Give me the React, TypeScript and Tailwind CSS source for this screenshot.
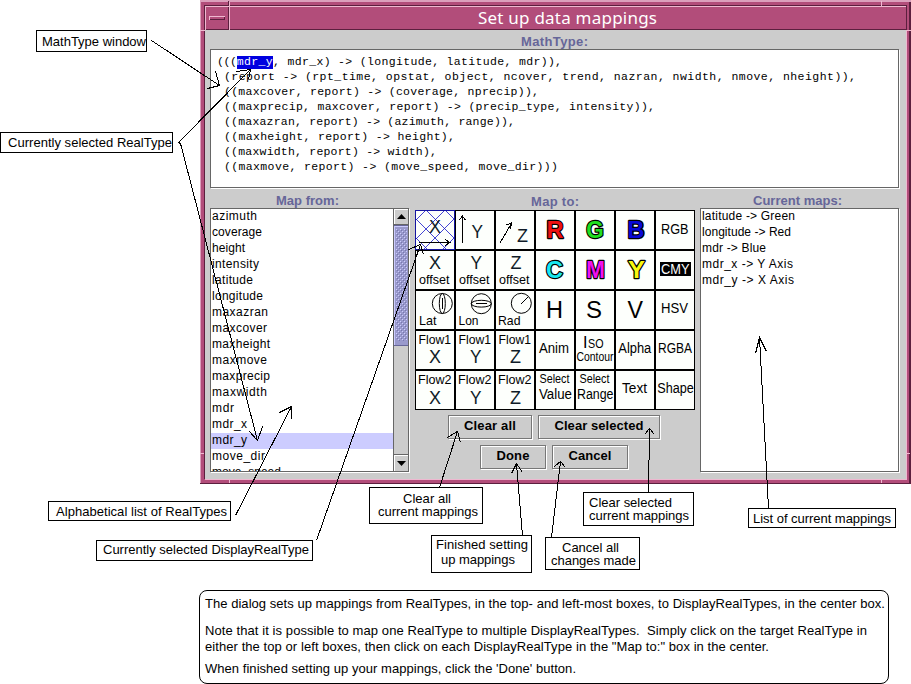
import { useLayoutEffect, useRef, useState } from "react";
import type { ReactNode } from "react";

// Single line of text whose tracking is computed so that it spans `w` pixels.
function Fit({ w, children, className = "" }: { w: number; children: string; className?: string }) {
  const ref = useRef<HTMLSpanElement>(null);
  const [spacing, setSpacing] = useState(0);
  useLayoutEffect(() => {
    const el = ref.current;
    if (!el) return;
    const natural = el.getBoundingClientRect().width;
    setSpacing((w - natural) / Math.max(1, children.length - 1));
  }, [w, children]);
  return (
    <span ref={ref} className={`inline-block shrink-0 whitespace-pre ${className}`} style={{ letterSpacing: `${spacing}px` }}>
      {children}
    </span>
  );
}

const mathLines: [string, number][] = [
  ["(report -> (rpt_time, opstat, object, ncover, trend, nazran, nwidth, nmove, nheight)),", 632],
  ["((maxcover, report) -> (coverage, nprecip)),", 315],
  ["((maxprecip, maxcover, report) -> (precip_type, intensity)),", 431],
  ["((maxazran, report) -> (azimuth, range)),", 291],
  ["((maxheight, report) -> height),", 231],
  ["((maxwidth, report) -> width),", 213],
  ["((maxmove, report) -> (move_speed, move_dir)))", 334],
];

const realTypes: [string, number][] = [
  ["azimuth", 45], ["coverage", 50], ["height", 33], ["intensity", 47], ["latitude", 41],
  ["longitude", 51], ["maxazran", 56], ["maxcover", 55], ["maxheight", 58], ["maxmove", 55],
  ["maxprecip", 58], ["maxwidth", 55], ["mdr", 22], ["mdr_x", 35], ["mdr_y", 35],
  ["move_dir", 53], ["move_speed", 69],
];

const currentMaps: [string, number][] = [
  ["latitude -> Green", 93], ["longitude -> Red", 89], ["mdr -> Blue", 64],
  ["mdr_x -> Y Axis", 91], ["mdr_y -> X Axis", 92],
];

function T({ x, y, w, size = 13.5, children, className = "fill-black" }: {
  x: number; y: number; w: number; size?: number; children: string; className?: string;
}) {
  return (
    <text x={x} y={y} fontSize={size} textLength={w} lengthAdjust="spacingAndGlyphs" className={className}>
      {children}
    </text>
  );
}

function Cell({ children, selected = false }: { children: ReactNode; selected?: boolean }) {
  return (
    <div className={`h-10 w-10 border bg-[#fdfffc] ${selected ? "border-[#1414a0]" : "border-black"}`}>
      <svg viewBox="1 1 38 38" className="block h-[38px] w-[38px] overflow-visible" fill="none" stroke="none">
        {children}
      </svg>
    </div>
  );
}

function Colour({ x, w, fill, children }: { x: number; w: number; fill: string; children: string }) {
  return (
    <text x={x} y="28" fontSize="24" fontWeight="bold" textLength={w} lengthAdjust="spacingAndGlyphs" fill={fill} stroke="#000" strokeWidth="2.4" paintOrder="stroke" strokeLinejoin="round">
      {children}
    </text>
  );
}

const axis = "fill-[#101c28]";

function MapGrid() {
  return (
    <div className="grid w-[280px] grid-cols-7">
      <Cell selected>
        <g stroke="#1414c8" strokeWidth=".8">
          <path d="M1 10 10 1M1 29 29 1M9 39 39 9M28 39 39 28M12 1 39 28M31 1 39 9M1 9 31 39M1 28 12 39" />
        </g>
        <path d="M4 32.5H35M30 29.5l5 3-5 3" stroke="#000" shapeRendering="crispEdges" />
        <T x={14} y={23} w={12} size={18} className={axis}>X</T>
      </Cell>
      <Cell>
        <path d="M7.5 33V6M4.5 10l3-4 3 4" stroke="#000" shapeRendering="crispEdges" />
        <T x={16.5} y={28} w={11.5} size={18} className={axis}>Y</T>
      </Cell>
      <Cell>
        <path d="M5 33 16.7 13M11.5 15l5.2-2.2-1.4 6.2" stroke="#000" shapeRendering="crispEdges" />
        <T x={22} y={32} w={11} size={18} className={axis}>Z</T>
      </Cell>
      <Cell><Colour x={11.5} w={17} fill="#f01010">R</Colour></Cell>
      <Cell><Colour x={11.3} w={17.5} fill="#20e020">G</Colour></Cell>
      <Cell><Colour x={12.5} w={17} fill="#0808d8">B</Colour></Cell>
      <Cell><T x={6} y={23.5} w={27.5} size={14}>RGB</T></Cell>

      {([["X", 14, 12], ["Y", 15.5, 11.5], ["Z", 15.5, 11]] as const).map(([l, x, w]) => (
        <Cell key={l}>
          <T x={x} y={19} w={w} size={18} className={axis}>{l}</T>
          <T x={4} y={33.5} w={30.5}>offset</T>
        </Cell>
      ))}
      <Cell><Colour x={11} w={17} fill="#18e8f0">C</Colour></Cell>
      <Cell><Colour x={11} w={19} fill="#f010f0">M</Colour></Cell>
      <Cell><Colour x={13} w={17} fill="#f8f810">Y</Colour></Cell>
      <Cell>
        <rect x="4.7" y="12" width="31" height="14" fill="#000" shapeRendering="crispEdges" />
        <T x={6} y={23.5} w={28.5} size={14} className="fill-white">CMY</T>
      </Cell>

      <Cell>
        <g stroke="#000"><circle cx="27.3" cy="13.5" r="10" /><ellipse cx="27.3" cy="13.5" rx="3" ry="10" /><path d="M27.5 8v11" /></g>
        <T x={4} y={35.3} w={17.5}>Lat</T>
      </Cell>
      <Cell>
        <g stroke="#000"><circle cx="26.3" cy="13.7" r="10" /><ellipse cx="26.3" cy="13.7" rx="10" ry="3.4" /><path d="M21 13.5h11" /></g>
        <T x={3.5} y={35.3} w={20}>Lon</T>
      </Cell>
      <Cell>
        <g stroke="#000"><circle cx="26.3" cy="13.3" r="10" /><path d="M26 14l7-7" /></g>
        <T x={3} y={35.3} w={22.5}>Rad</T>
      </Cell>
      <Cell><T x={11} y={28} w={17} size={23}>H</T></Cell>
      <Cell><T x={11} y={28} w={16} size={23}>S</T></Cell>
      <Cell><T x={12.5} y={28} w={15.5} size={23}>V</T></Cell>
      <Cell><T x={6} y={22.7} w={27} size={14}>HSV</T></Cell>

      {([["X", 14, 12], ["Y", 15, 11.5], ["Z", 15, 11]] as const).map(([l, x, w]) => (
        <Cell key={l}>
          <T x={3.5} y={13.7} w={32.5} size={13.5}>Flow1</T>
          <T x={x} y={32.7} w={w} size={18} className={axis}>{l}</T>
        </Cell>
      ))}
      <Cell><T x={4} y={23} w={30} size={14}>Anim</T></Cell>
      <Cell>
        <T x={8} y={18} w={4.5} size={16.5}>I</T>
        <T x={13} y={18} w={15.5} size={12.5}>SO</T>
        <T x={1.5} y={31} w={37} size={12}>Contour</T>
      </Cell>
      <Cell><T x={3.3} y={23} w={33} size={14}>Alpha</T></Cell>
      <Cell><T x={3} y={23} w={34} size={14}>RGBA</T></Cell>

      {([["X", 14, 12], ["Y", 15, 11.5], ["Z", 15, 11]] as const).map(([l, x, w]) => (
        <Cell key={l}>
          <T x={3} y={13.7} w={33.5} size={13.5}>Flow2</T>
          <T x={x} y={33.7} w={w} size={18} className={axis}>{l}</T>
        </Cell>
      ))}
      <Cell>
        <T x={4.5} y={13} w={30} size={12}>Select</T>
        <T x={4} y={29.3} w={33} size={14}>Value</T>
      </Cell>
      <Cell>
        <T x={4.5} y={13} w={30} size={12}>Select</T>
        <T x={2} y={29.3} w={36.5} size={14}>Range</T>
      </Cell>
      <Cell><T x={7} y={23.3} w={25} size={14}>Text</T></Cell>
      <Cell><T x={2.3} y={23.3} w={36.5} size={14}>Shape</T></Cell>
    </div>
  );
}

function PushButton({ size, w, children }: { size: string; w: number; children: string }) {
  return (
    <button className={`flex h-6 items-center justify-center border border-[#777] pb-[3px] text-[13px] font-bold shadow-[1px_1px_0_#fff,inset_1px_1px_0_#fff] ${size}`}>
      <Fit w={w}>{children}</Fit>
    </button>
  );
}

function Heading({ w, className, children }: { w: number; className: string; children: string }) {
  return (
    <div className={`flex font-bold text-[13px] leading-[15px] text-[#666699] ${className}`}>
      <Fit w={w}>{children}</Fit>
    </div>
  );
}

const sunken = "border border-[#666] bg-white shadow-[1px_1px_0_#fff]";

function ScrollBar() {
  return (
    <div className="flex h-full w-[15px] flex-col border-l border-[#666] bg-[#ccc]">
      <div className="flex h-4 items-center justify-center border-b border-[#666] shadow-[inset_1px_1px_0_#fff]">
        <svg viewBox="0 0 9 5" className="h-[5px] w-[9px]"><path d="M4.5 0 9 5H0z" /></svg>
      </div>
      <div className="h-[121px] border-y border-[#666699] bg-[#9999cc] shadow-[inset_1px_1px_0_#ccccff]">
        <svg className="ml-[2px] mt-[3px] block h-[112px] w-[11px]">
          <defs>
            <pattern id="bumps" width="4" height="4" patternUnits="userSpaceOnUse">
              <path d="M0 0h1v1H0zM2 2h1v1H2z" fill="#ccccff" />
              <path d="M1 1h1v1H1zM3 3h1v1H3z" fill="#7777b0" />
            </pattern>
          </defs>
          <rect width="11" height="112" fill="url(#bumps)" />
        </svg>
      </div>
      <div className="flex-1" />
      <div className="flex h-[17px] items-center justify-center border-t border-[#666] shadow-[inset_1px_1px_0_#fff]">
        <svg viewBox="0 0 9 5" className="h-[5px] w-[9px]"><path d="M0 0H9L4.5 5z" /></svg>
      </div>
    </div>
  );
}

function Dialog() {
  return (
    <section className="relative ml-[200px] flex h-[484px] w-[711px] flex-col border-b border-r-2 border-[#5c1f3e] bg-[#b24d7a]">
      {/* Frame bevels and resize-corner notches */}
      <svg className="absolute left-0 top-0 h-[484px] w-[711px]" shapeRendering="crispEdges">
        <path d="M0 0H711V2H0zM0 0H1V483H0z" fill="#dba0bc" />
        <path d="M4 5H706V6H4zM4 5H5V479H4zM28 1H29V30H28zM706 5H707V30H706z" fill="#5c1f3e" />
        <path d="M5 6H706V7H5zM5 6H6V30H5zM29 2H30V30H29zM5 479H707V480H5zM706 30H707V480H706zM0 30H5V31H0zM707 30H711V31H707zM681 1H682V6H681zM0 453H4V454H0zM29 480H30V483H29zM681 480H682V483H681zM706 453H710V454H706z" fill="#efb8d0" />
        <path d="M9 16H25V17H9zM9 16H10V20H9z" fill="#efb8d0" />
        <path d="M10 19H25V20H10zM24 17H25V20H24z" fill="#5c1f3e" />
      </svg>
      <header className="ml-[5px] flex h-[30px] w-[701px] border-b border-[#5c1f3e] pl-[273px] pt-[6px] font-['Noto_Sans','Open_Sans',sans-serif] text-[17px] leading-6 text-white">
        <Fit w={179}>Set up data mappings</Fit>
      </header>
      <div className="ml-[5px] flex h-[449px] w-[701px] flex-col bg-[#ccc] px-[5px] pt-1">
        <Heading w={67} className="h-[15px] pl-[311px]">MathType:</Heading>
        <div className={`h-[139px] w-[689px] pt-[4px] font-['Liberation_Mono',monospace] text-[11.5px] leading-[15px] ${sunken}`}>
          <div className="flex pl-[6px]">
            <Fit w={20}>(((</Fit>
            <Fit w={36} className="-mb-px mt-[2px] h-[13px] bg-[#0000e0] leading-[11px] text-white">mdr_y</Fit>
            <Fit w={289}>, mdr_x) -&gt; (longitude, latitude, mdr)),</Fit>
          </div>
          {mathLines.map(([line, w]) => (
            <div key={line} className="flex pl-[13px]"><Fit w={w}>{line}</Fit></div>
          ))}
        </div>
        <div className="flex pt-[5px]">
          <div className="w-[200px]">
            <Heading w={63} className="pl-[66px]">Map from:</Heading>
            <div className={`flex h-[264px] w-[199px] overflow-hidden ${sunken}`}>
              <ul className="flex-1 overflow-hidden text-[12px] leading-[15px]">
                {realTypes.map(([name, w]) => (
                  <li key={name} className={`flex h-4 pl-px ${name === "mdr_y" ? "bg-[#ccccff]" : ""}`}><Fit w={w}>{name}</Fit></li>
                ))}
              </ul>
              <ScrollBar />
            </div>
          </div>
          <div className="ml-[5px] w-[280px]">
            <Heading w={48} className="h-[17px] pl-[116px] pt-px">Map to:</Heading>
            <MapGrid />
            <div className="mt-[5px] flex gap-[6px] pl-[33px]">
              <PushButton size="w-[84px]" w={52}>Clear all</PushButton>
              <PushButton size="w-[122px]" w={89}>Clear selected</PushButton>
            </div>
            <div className="mt-[6px] flex gap-[6px] pl-[65px]">
              <PushButton size="w-[66px]" w={33}>Done</PushButton>
              <PushButton size="w-[76px]" w={43}>Cancel</PushButton>
            </div>
          </div>
          <div className="ml-[5px] w-[200px]">
            <Heading w={89} className="pl-[53px]">Current maps:</Heading>
            <ul className={`h-[264px] w-[199px] pl-px text-[12px] leading-[15px] ${sunken}`}>
              {currentMaps.map(([name, w]) => (
                <li key={name} className="flex h-4"><Fit w={w}>{name}</Fit></li>
              ))}
            </ul>
          </div>
        </div>
      </div>
    </section>
  );
}

function Callout({ place, children }: { place: string; children: ReactNode }) {
  return <div className={`absolute border border-black bg-white text-[13px] leading-[13px] ${place}`}>{children}</div>;
}

const arrows = [
  "M151 40 219 85M215 71 219 85 207 88",
  "M178 142 250 69M236 71 250 69 248 79",
  "M178 142 180 143 257 440M249 431 257 440 262 426",
  "M235 515 291 406M279 412 291 406V418",
  "M316 540 420 244M408 249 420 244 423 254",
  "M439 487 457 431M447 437 457 431 460 442",
  "M522 535 516 463M511 473 516 463 522 472",
  "M551 537 560 461M554 466 560 461 565 467",
  "M648 492 649 428M644 434 649 428 654 434",
  "M768 508 759 337M755 353 759 337 766 351",
];

export default function App() {
  return (
    <main className="relative h-[684px] w-[911px] overflow-hidden bg-white font-['Liberation_Sans',Arial,sans-serif] text-black">
      <Dialog />

      <Callout place="left-[36px] top-[30px] h-[22px] w-[111px] pl-[5px] pt-[4px]"><Fit w={104}>MathType window</Fit></Callout>
      <Callout place="left-0 top-[132px] h-[21px] w-[173px] pl-[7px] pt-[3px]"><Fit w={164}>Currently selected RealType</Fit></Callout>
      <Callout place="left-[48px] top-[501px] h-[20px] w-[183px] pl-[7px] pt-[3px]"><Fit w={171}>Alphabetical list of RealTypes</Fit></Callout>
      <Callout place="left-[96px] top-[540px] h-[21px] w-[217px] pl-[6px] pt-[2px]"><Fit w={206}>Currently selected DisplayRealType</Fit></Callout>
      <Callout place="left-[369px] top-[487px] flex h-[37px] w-[114px] flex-col pl-[8px] pt-[4px]">
        <Fit w={48} className="ml-[25px] self-start">Clear all</Fit>
        <Fit w={100} className="self-start">current mappings</Fit>
      </Callout>
      <Callout place="left-[431px] top-[535px] flex h-[38px] w-[101px] flex-col pl-[4px] pt-[2px]">
        <Fit w={92} className="self-start">Finished setting</Fit>
        <Fit w={74} className="ml-[5px] mt-[2px] self-start">up mappings</Fit>
      </Callout>
      <Callout place="left-[545px] top-[537px] flex h-[33px] w-[95px] flex-col pl-[5px] pt-[3px]">
        <Fit w={57} className="ml-[11px] self-start">Cancel all</Fit>
        <Fit w={85} className="self-start">changes made</Fit>
      </Callout>
      <Callout place="left-[583px] top-[492px] flex h-[34px] w-[111px] flex-col pl-[5px] pt-[3px]">
        <Fit w={83} className="self-start">Clear selected</Fit>
        <Fit w={100} className="self-start">current mappings</Fit>
      </Callout>
      <Callout place="left-[748px] top-[508px] h-[20px] w-[148px] pl-[4px] pt-[3px]"><Fit w={138}>List of current mappings</Fit></Callout>

      <article className="ml-[199px] mt-[106px] flex h-[94px] w-[690px] flex-col items-start rounded-[8px] border border-black pl-[5px] pt-[5px] text-[13px] leading-4">
        <Fit w={680}>The dialog sets up mappings from RealTypes, in the top- and left-most boxes, to DisplayRealTypes, in the center box.</Fit>
        <Fit w={662} className="mt-[11px]">{"Note that it is possible to map one RealType to multiple DisplayRealTypes.  Simply click on the target RealType in"}</Fit>
        <Fit w={564}>either the top or left boxes, then click on each DisplayRealType in the "Map to:" box in the center.</Fit>
        <Fit w={371} className="mt-[6px]">When finished setting up your mappings, click the 'Done' button.</Fit>
      </article>

      <svg className="pointer-events-none absolute left-0 top-0 h-[684px] w-[911px]" fill="none" stroke="#000" shapeRendering="crispEdges">
        {arrows.map((d) => <path key={d} d={d} transform="translate(.5 .5)" />)}
      </svg>
    </main>
  );
}
